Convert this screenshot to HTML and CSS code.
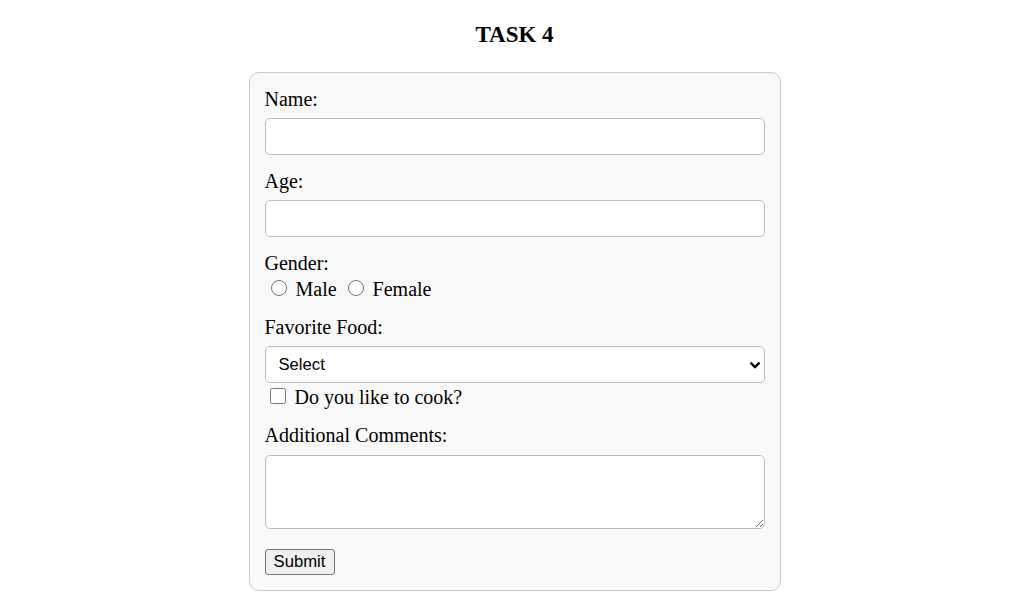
FILE: index.html
```html
<!DOCTYPE html>
<html lang="en">
<head>
<meta charset="utf-8">
<title>Task 4</title>
<link rel="stylesheet" href="styles.css">
</head>
<body>
<h2 class="title">TASK 4</h2>
<form class="card">
  <div class="field">
    <label class="label" for="name">Name:</label>
    <input class="control" type="text" id="name">
  </div>
  <div class="field">
    <label class="label" for="age">Age:</label>
    <input class="control" type="number" id="age">
  </div>
  <div class="field">
    <span class="label">Gender:</span>
    <div class="choice-line"><input class="radio" type="radio" name="gender" id="male"> <label for="male">Male</label> <input class="radio" type="radio" name="gender" id="female"> <label for="female">Female</label></div>
  </div>
  <div class="field">
    <label class="label" for="food">Favorite Food:</label>
    <div class="select-wrap">
      <select class="control select" id="food">
        <option>Select</option>
        <option>Pizza</option>
        <option>Pasta</option>
        <option>Burger</option>
      </select>
      <svg class="chevron" width="10" height="7" viewBox="0 0 10 7" aria-hidden="true"><path d="M1.2 1.3 L5 5.1 L8.8 1.3" fill="none" stroke="#000" stroke-width="2.2" stroke-linecap="square"/></svg>
    </div>
    <div class="choice-line"><input class="check" type="checkbox" id="cook"> <label for="cook">Do you like to cook?</label></div>
  </div>
  <div class="field field-last">
    <label class="label" for="comments">Additional Comments:</label>
    <textarea class="control area" id="comments"></textarea>
  </div>
  <button class="submit" type="submit">Submit</button>
</form>
</body>
</html>
```

FILE: styles.css
```css
html, body {
  background: #ffffff;
}

body {
  margin: 0;
  padding: 0 0 0 3px;
  font-family: "Liberation Serif", "Times New Roman", serif;
  font-size: 20px;
  color: #000000;
}

.title {
  font-size: 23px;
  font-weight: bold;
  text-align: center;
  margin: 22px 0 24px;
}

.card {
  width: 532px;
  box-sizing: border-box;
  margin: 0 auto;
  padding: 15px;
  background: #f9f9f9;
  border: 1px solid #cccccc;
  border-radius: 10px;
}

.field {
  margin-bottom: 15px;
}

.field-last {
  margin-bottom: 20px;
}

.label {
  display: block;
  line-height: 23px;
}

.choice-line {
  line-height: 23px;
}

.control {
  display: block;
  width: 100%;
  height: 37px;
  box-sizing: border-box;
  margin: 7px 0 0;
  padding: 0 12px;
  border: 1px solid #bdbdbd;
  border-radius: 5px;
  background: #ffffff;
  font-family: "Liberation Sans", Arial, sans-serif;
  font-size: 16.67px;
  color: #000000;
}

.select-wrap {
  position: relative;
  margin-top: 7px;
}

.select {
  margin-top: 0;
  padding: 0 30px 0 13px;
  -webkit-appearance: none;
  appearance: none;
}

.chevron {
  position: absolute;
  right: 5px;
  top: 16px;
  pointer-events: none;
}

.area {
  height: 74px;
  margin-top: 8px;
  padding: 4px 6px;
  resize: vertical;
}

.radio {
  width: 16px;
  height: 16px;
  margin: 5px 4px 0 6px;
  vertical-align: baseline;
}

.check {
  width: 16px;
  height: 16px;
  margin: 5px 4px 0 5px;
  vertical-align: baseline;
}

.submit {
  display: block;
  width: 70px;
  height: 26px;
  margin: 0;
  padding: 0;
  border: 1px solid #767676;
  border-radius: 3px;
  background: #efefef;
  font-family: "Liberation Sans", Arial, sans-serif;
  font-size: 16.67px;
  color: #000000;
  line-height: 24px;
  text-align: center;
}
```
